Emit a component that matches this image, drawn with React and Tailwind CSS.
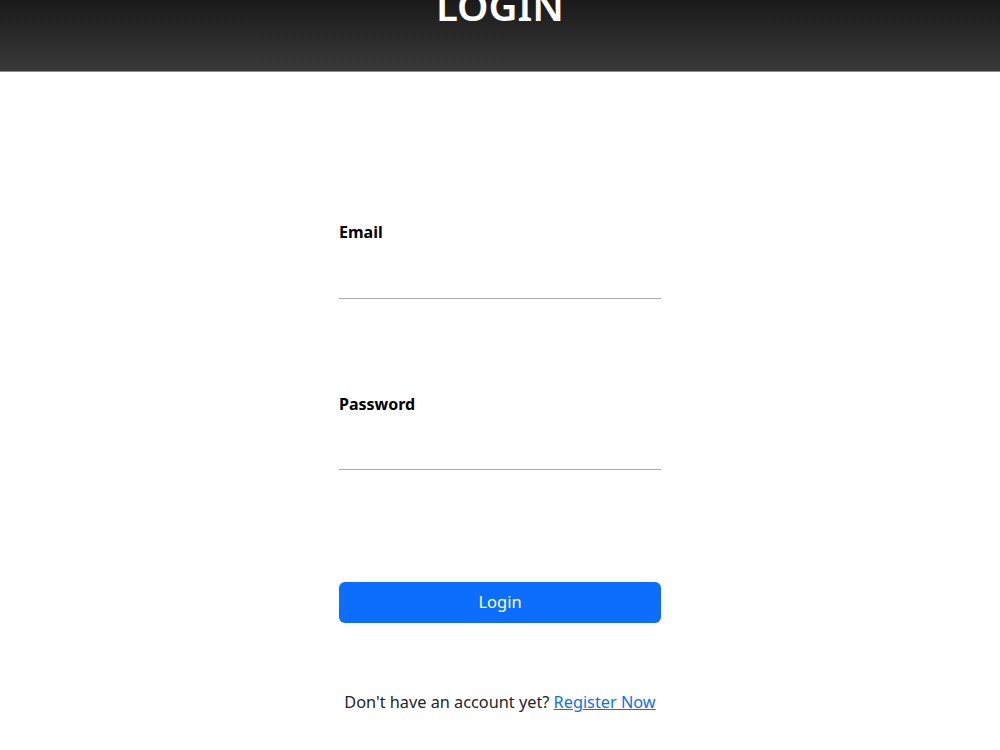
import React, { useState } from 'react';

// simple login page: dark header bar, underline inputs, blue button
function App() {
  const [email, setEmail] = useState('');
  const [password, setPassword] = useState('');

  return (
    <div className="min-h-screen bg-white font-['Noto_Sans',sans-serif] text-black">
      <header className="h-[72px] overflow-hidden bg-gradient-to-b from-[#1b1a1a] to-[#3b3a3a] border-b border-[#8a8a8a] flex justify-center">
        <h1 className="text-[40px] leading-none font-semibold text-white -mt-[14px]">LOGIN</h1>
      </header>

      <form className="w-[322px] mx-auto pt-[148px]" onSubmit={(e) => e.preventDefault()}>
        <label className="block text-[16px] leading-6 font-bold">Email</label>
        <input
          type="email"
          value={email}
          onChange={(e) => setEmail(e.target.value)}
          className="block w-full h-[55px] border-b border-[#a9a9a9] outline-none"
        />

        <label className="block mt-[93px] text-[16px] leading-6 font-bold">Password</label>
        <input
          type="password"
          value={password}
          onChange={(e) => setPassword(e.target.value)}
          className="block w-full h-[54px] border-b border-[#a9a9a9] outline-none"
        />

        <button
          type="submit"
          className="mt-[112px] w-full h-[41px] rounded-md bg-[#0d6efd] text-white text-[16.5px]"
        >
          Login
        </button>
      </form>

      <p className="mt-[67px] text-center text-[16.3px] leading-6 text-[#212529]">
        Don't have an account yet?{' '}
        <a href="#" className="text-[#0d6efd] underline">Register Now</a>
      </p>
    </div>
  );
}

export default App;
